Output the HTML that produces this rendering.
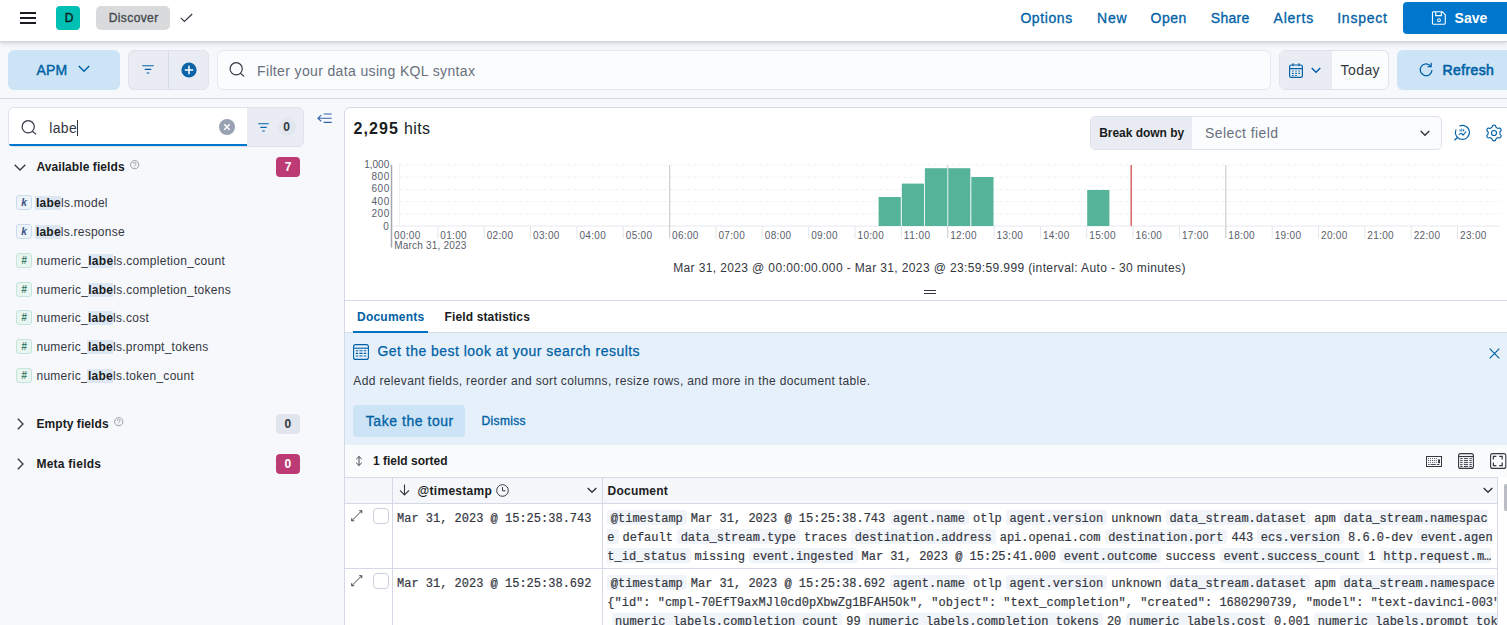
<!DOCTYPE html>
<html lang="en"><head><meta charset="utf-8"><title>Discover - Elastic</title>
<style>
html,body{margin:0;padding:0}
body{width:1507px;height:625px;overflow:hidden;position:relative;background:#F7F8FC;font-family:"Liberation Sans",sans-serif;color:#343741}
.t{position:absolute;white-space:nowrap;line-height:1;margin:0}
.b{position:absolute;box-sizing:border-box}
svg{position:absolute;overflow:visible}

.hl{background:#DDE7F4;font-weight:700;color:#1A1C21}
.tok{position:absolute;box-sizing:border-box;width:15.4px;height:15px;border-radius:3px;font-size:10px;line-height:13px;text-align:center;font-weight:700}
.tk{background:#EEF3FA;border:1px solid #CBDBEE;color:#355282;font-style:italic}
.tn{background:#E9F5F1;border:1px solid #C5E5DA;color:#3B7D6A;font-style:italic}
.dt{background:#F1F4F9;border-radius:3px;display:inline-block;line-height:12px;padding:3px 4px 0 3.5px;margin:0 4px 0 4.25px;vertical-align:baseline}
.ml{position:absolute;white-space:pre;font-family:"Liberation Mono",monospace;font-size:12px;line-height:18px;height:18px;color:#343741;overflow:hidden;-webkit-text-stroke:0.2px #343741}

</style></head><body>
<div class="b" style="left:0px;top:0px;width:1507px;height:42px;background:#FFFFFF;border-bottom:1px solid #D0D3DE;box-shadow:0 1px 2px rgba(110,115,135,.16),0 3px 5px rgba(110,115,135,.11);"></div>
<div class="b" style="left:20px;top:12px;width:16px;height:1.6px;background:#1A1C21;"></div>
<div class="b" style="left:20px;top:17px;width:16px;height:1.6px;background:#1A1C21;"></div>
<div class="b" style="left:20px;top:22.3px;width:16px;height:1.6px;background:#1A1C21;"></div>
<div class="b" style="left:56px;top:6px;width:24px;height:24px;background:#00BFB3;border-radius:4px;"></div>
<div class="t" style="left:64.70px;top:12.00px;font-size:12px;color:#0B1A1A;-webkit-text-stroke:0.35px #0B1A1A;">D</div>
<div class="b" style="left:96px;top:6px;width:74px;height:24px;background:#D9DADC;border-radius:5px;"></div>
<div class="t" style="left:108.70px;top:12.00px;font-size:12px;color:#45494F;letter-spacing:0.403px;-webkit-text-stroke:0.35px #45494F;">Discover</div>
<svg style="left:180px;top:13px;" width="13" height="10" viewBox="0 0 13 10" fill="none"><path d="M0.8 4.9 L4.4 8.4 L12.2 1" stroke="#343741" stroke-width="1.2"/></svg>
<div class="t" style="left:1020.40px;top:11.00px;font-size:14px;color:#0061A6;letter-spacing:0.592px;-webkit-text-stroke:0.3px #0061A6;">Options</div>
<div class="t" style="left:1097.00px;top:11.00px;font-size:14px;color:#0061A6;letter-spacing:0.797px;-webkit-text-stroke:0.3px #0061A6;">New</div>
<div class="t" style="left:1150.60px;top:11.00px;font-size:14px;color:#0061A6;letter-spacing:0.484px;-webkit-text-stroke:0.3px #0061A6;">Open</div>
<div class="t" style="left:1210.80px;top:11.00px;font-size:14px;color:#0061A6;letter-spacing:0.260px;-webkit-text-stroke:0.3px #0061A6;">Share</div>
<div class="t" style="left:1273.60px;top:11.00px;font-size:14px;color:#0061A6;letter-spacing:0.763px;-webkit-text-stroke:0.3px #0061A6;">Alerts</div>
<div class="t" style="left:1337.20px;top:11.00px;font-size:14px;color:#0061A6;letter-spacing:0.777px;-webkit-text-stroke:0.3px #0061A6;">Inspect</div>
<div class="b" style="left:1403px;top:2px;width:110px;height:32px;background:#0077CC;border-radius:4px;"></div>
<svg style="left:1432px;top:11px;" width="14" height="14" viewBox="0 0 15 15" fill="none"><path d="M1.5 0.8h9.6l3.1 3.1v9.3a1 1 0 0 1-1 1h-11.7a1 1 0 0 1-1-1v-11.4a1 1 0 0 1 1-1z" stroke="#fff" stroke-width="1.2"/><path d="M4 1v4h6v-4" stroke="#fff" stroke-width="1.2"/><circle cx="7.5" cy="9.8" r="1.5" stroke="#fff" stroke-width="1.1"/></svg>
<div class="t" style="left:1454.60px;top:11.00px;font-size:14px;color:#FFFFFF;font-weight:700;letter-spacing:-0.032px;">Save</div>
<div class="b" style="left:0px;top:98px;width:1507px;height:1px;background:#D3DAE6;"></div>
<div class="b" style="left:8px;top:50px;width:112px;height:40px;background:#CCE4F5;border-radius:6px;"></div>
<div class="t" style="left:36.60px;top:63.00px;font-size:14px;color:#0061A6;letter-spacing:0.131px;-webkit-text-stroke:0.4px #0061A6;">APM</div>
<svg style="left:78px;top:65px;" width="12" height="8" viewBox="0 0 12 8" fill="none"><path d="M0.8 1 L6 6.3 L11.2 1" stroke="#0061A6" stroke-width="1.5"/></svg>
<div class="b" style="left:128px;top:50px;width:81px;height:40px;background:#E9EDF3;border-radius:6px;border:1px solid #DDE2EC;"></div>
<div class="b" style="left:168px;top:51px;width:1px;height:38px;background:#D5DBE6;"></div>
<svg style="left:142px;top:65px;" width="12" height="9" viewBox="0 0 12 9" fill="none"><path d="M0.3 0.8h11.4M2.7 4.4h6.6M4.6 8h2.8" stroke="#0061A6" stroke-width="1.1"/></svg>
<svg style="left:180.5px;top:61.5px" width="16" height="16" viewBox="0 0 16 16"><circle cx="8" cy="8" r="7.6" fill="#0B64A8"/><path d="M8 3.8v8.4M3.8 8h8.4" stroke="#fff" stroke-width="1.5"/></svg>
<div class="b" style="left:217px;top:50px;width:1054px;height:40px;background:#FBFCFD;border-radius:6px;border:1px solid #E3E7EF;"></div>
<svg style="left:229px;top:62.2px;" width="16" height="15" viewBox="0 0 16 15" fill="none"><circle cx="7.2" cy="6.8" r="6.1" stroke="#343741" stroke-width="1.2"/><path d="M11.3 11.2 L15.2 14.4" stroke="#343741" stroke-width="1.2"/></svg>
<div class="t" style="left:257.00px;top:64.00px;font-size:14px;color:#69707D;letter-spacing:0.360px;">Filter your data using KQL syntax</div>
<div class="b" style="left:1279px;top:50px;width:110px;height:40px;background:#FBFCFD;border-radius:6px;border:1px solid #DDE2EC;"></div>
<div class="b" style="left:1280px;top:51px;width:52px;height:38px;background:#E9EDF3;border-radius:5px 0 0 5px;"></div>
<svg style="left:1289px;top:62.5px;" width="14" height="15" viewBox="0 0 14 15" fill="none"><rect x="0.6" y="2" width="12.8" height="12.4" rx="1.6" stroke="#0061A6" stroke-width="1.2"/><path d="M0.6 5.6h12.8M4 0.3v3M10 0.3v3" stroke="#0061A6" stroke-width="1.2"/><path d="M3 8h1.6M6.2 8h1.6M9.4 8h1.6M3 10.3h1.6M6.2 10.3h1.6M9.4 10.3h1.6M3 12.5h1.6M6.2 12.5h1.6" stroke="#0061A6" stroke-width="1.2"/></svg>
<svg style="left:1311px;top:66.5px;" width="10" height="7" viewBox="0 0 10 7" fill="none"><path d="M0.7 0.9 L5 5.3 L9.3 0.9" stroke="#0061A6" stroke-width="1.4"/></svg>
<div class="t" style="left:1340.60px;top:63.00px;font-size:14px;color:#343741;letter-spacing:0.410px;">Today</div>
<div class="b" style="left:1397px;top:50px;width:116px;height:40px;background:#CCE4F5;border-radius:6px;"></div>
<svg style="left:1418.8px;top:61.8px;" width="14" height="15" viewBox="0 0 14 15" fill="none"><path d="M11.8 4.2A5.9 5.9 0 1 0 13 8" stroke="#0061A6" stroke-width="1.2"/><path d="M8.6 4.6h3.6v-3.8" stroke="#0061A6" stroke-width="1.2"/></svg>
<div class="t" style="left:1442.60px;top:63.00px;font-size:14px;color:#0061A6;letter-spacing:0.363px;-webkit-text-stroke:0.6px #0061A6;">Refresh</div>
<div class="b" style="left:8px;top:107px;width:296px;height:40px;background:#E9EDF3;border-radius:6px;border:1px solid #DDE2EC;"></div>
<div class="b" style="left:9px;top:108px;width:238px;height:38px;background:#FFFFFF;border-radius:5px 0 0 5px;"></div>
<div class="b" style="left:9px;top:144px;width:238px;height:2px;background:#0077CC;border-radius:0 0 0 5px;"></div>
<svg style="left:20.5px;top:119.5px;" width="16" height="15" viewBox="0 0 16 15" fill="none"><circle cx="7.2" cy="6.8" r="6.1" stroke="#343741" stroke-width="1.2"/><path d="M11.3 11.2 L15.2 14.4" stroke="#343741" stroke-width="1.2"/></svg>
<div class="t" style="left:49.20px;top:121.00px;font-size:14px;color:#343741;letter-spacing:0.377px;">labe</div>
<div class="b" style="left:77.3px;top:119.5px;width:1px;height:16px;background:#343741;"></div>
<svg style="left:219px;top:119px" width="16" height="16" viewBox="0 0 16 16"><circle cx="8" cy="8" r="8" fill="#98A2B3"/><path d="M5.3 5.3l5.4 5.4M10.7 5.3l-5.4 5.4" stroke="#fff" stroke-width="1.5"/></svg>
<svg style="left:257.5px;top:123px;" width="11" height="9" viewBox="0 0 11 9" fill="none"><path d="M0.2 0.8h10.6M2.4 4.4h6.2M4.2 8h2.6" stroke="#0061A6" stroke-width="1.1"/></svg>
<div class="b" style="left:277.5px;top:118px;width:18px;height:18px;background:#E2E7EF;border-radius:9px;"></div>
<div class="t" style="left:283.20px;top:121.00px;font-size:12px;color:#343741;font-weight:700;">0</div>
<svg style="left:316.5px;top:113px;" width="15" height="11" viewBox="0 0 15 11" fill="none"><path d="M6.7 1h8M6.7 9.4h8M1.2 5.2h13.5M4.2 2.1L1 5.2l3.2 3.1" stroke="#2E62AA" stroke-width="1.15"/></svg>
<svg style="left:14px;top:164px;" width="12" height="7" viewBox="0 0 12 7" fill="none"><path d="M0.7 0.7 L6 6 L11.3 0.7" stroke="#343741" stroke-width="1.3"/></svg>
<div class="t" style="left:36.40px;top:161.00px;font-size:12px;color:#1A1C21;font-weight:700;letter-spacing:0.085px;">Available fields</div>
<svg style="left:130.4px;top:160.2px" width="9.4" height="9.4" viewBox="0 0 10 10" fill="none"><circle cx="5" cy="5" r="4.4" stroke="#69707D" stroke-width="0.7"/><path d="M3.6 4a1.4 1.4 0 1 1 2 1.3c-.4.2-.6.5-.6.9" stroke="#69707D" stroke-width="0.7"/><circle cx="5" cy="7.5" r="0.45" fill="#69707D"/></svg>
<div class="b" style="left:276px;top:157px;width:24px;height:20px;background:#BD3B74;border-radius:4px;"></div>
<div class="t" style="left:284.70px;top:161.00px;font-size:12px;color:#FFFFFF;font-weight:700;">7</div>
<div class="tok tk" style="left:16.3px;top:195.3px">k</div>
<div class="t" style="left:35.9px;top:197.00px;font-size:12px;letter-spacing:0.267px;color:#343741"><span class="hl" style="padding:0 0 0 .5px;margin-left:-.5px">labe</span>ls.model</div>
<div class="tok tk" style="left:16.3px;top:224.1px">k</div>
<div class="t" style="left:35.9px;top:226.00px;font-size:12px;letter-spacing:0.235px;color:#343741"><span class="hl" style="padding:0 0 0 .5px;margin-left:-.5px">labe</span>ls.response</div>
<div class="tok tn" style="left:16.3px;top:253.1px">#</div>
<div class="t" style="left:36.5px;top:255.00px;font-size:12px;letter-spacing:0.293px;color:#343741">numeric_<span class="hl" style="padding:0 0 0 .5px;margin-left:-.5px">labe</span>ls.completion_count</div>
<div class="tok tn" style="left:16.3px;top:282.3px">#</div>
<div class="t" style="left:36.5px;top:284.00px;font-size:12px;letter-spacing:0.284px;color:#343741">numeric_<span class="hl" style="padding:0 0 0 .5px;margin-left:-.5px">labe</span>ls.completion_tokens</div>
<div class="tok tn" style="left:16.3px;top:310.0px">#</div>
<div class="t" style="left:36.5px;top:312.00px;font-size:12px;letter-spacing:0.270px;color:#343741">numeric_<span class="hl" style="padding:0 0 0 .5px;margin-left:-.5px">labe</span>ls.cost</div>
<div class="tok tn" style="left:16.3px;top:339.1px">#</div>
<div class="t" style="left:36.5px;top:341.00px;font-size:12px;letter-spacing:0.259px;color:#343741">numeric_<span class="hl" style="padding:0 0 0 .5px;margin-left:-.5px">labe</span>ls.prompt_tokens</div>
<div class="tok tn" style="left:16.3px;top:367.9px">#</div>
<div class="t" style="left:36.5px;top:370.00px;font-size:12px;letter-spacing:0.260px;color:#343741">numeric_<span class="hl" style="padding:0 0 0 .5px;margin-left:-.5px">labe</span>ls.token_count</div>
<svg style="left:16.5px;top:417.5px;" width="7" height="12" viewBox="0 0 7 12" fill="none"><path d="M0.8 0.7 L6 6 L0.8 11.3" stroke="#343741" stroke-width="1.3"/></svg>
<div class="t" style="left:36.40px;top:418.00px;font-size:12px;color:#1A1C21;font-weight:700;letter-spacing:0.077px;">Empty fields</div>
<svg style="left:114.4px;top:417px" width="9.4" height="9.4" viewBox="0 0 10 10" fill="none"><circle cx="5" cy="5" r="4.4" stroke="#69707D" stroke-width="0.7"/><path d="M3.6 4a1.4 1.4 0 1 1 2 1.3c-.4.2-.6.5-.6.9" stroke="#69707D" stroke-width="0.7"/><circle cx="5" cy="7.5" r="0.45" fill="#69707D"/></svg>
<div class="b" style="left:276px;top:414px;width:24px;height:20px;background:#E0E5EE;border-radius:4px;"></div>
<div class="t" style="left:284.50px;top:418.00px;font-size:12px;color:#343741;font-weight:700;">0</div>
<svg style="left:16.5px;top:457.5px;" width="7" height="12" viewBox="0 0 7 12" fill="none"><path d="M0.8 0.7 L6 6 L0.8 11.3" stroke="#343741" stroke-width="1.3"/></svg>
<div class="t" style="left:36.40px;top:458.00px;font-size:12px;color:#1A1C21;font-weight:700;letter-spacing:0.258px;">Meta fields</div>
<div class="b" style="left:276px;top:454px;width:24px;height:20px;background:#BD3B74;border-radius:4px;"></div>
<div class="t" style="left:284.50px;top:458.00px;font-size:12px;color:#FFFFFF;font-weight:700;">0</div>
<div class="b" style="left:344px;top:107px;width:1170px;height:530px;background:#FFFFFF;border:1px solid #D3DAE6;border-radius:6px 0 0 0;"></div>
<div class="t" style="left:353.40px;top:121.00px;font-size:16px;color:#1A1C21;font-weight:700;letter-spacing:1.140px;">2,295</div>
<div class="t" style="left:404.00px;top:121.00px;font-size:16px;color:#1A1C21;letter-spacing:0.367px;">hits</div>
<div class="b" style="left:1090px;top:116px;width:352px;height:33.5px;background:#FBFCFD;border-radius:5px;border:1px solid #DDE2EC;"></div>
<div class="b" style="left:1091px;top:117px;width:101px;height:31.5px;background:#E9EDF3;border-radius:5px 0 0 5px;"></div>
<div class="t" style="left:1099.20px;top:127.00px;font-size:12px;color:#1A1C21;font-weight:700;letter-spacing:-0.029px;">Break down by</div>
<div class="t" style="left:1205.00px;top:126.00px;font-size:14px;color:#69707D;letter-spacing:0.411px;">Select field</div>
<svg style="left:1419.6px;top:129.5px;" width="10" height="7" viewBox="0 0 10 7" fill="none"><path d="M0.7 0.9 L5 5.3 L9.3 0.9" stroke="#343741" stroke-width="1.4"/></svg>
<svg style="left:1454px;top:124.4px;" width="17" height="17" viewBox="0 0 17 17" fill="none"><path d="M5.44 2.06A7 7 0 1 1 2.06 5.44" stroke="#0061A6" stroke-width="1.1"/><path d="M3.45 13.35 L0.5 16.3" stroke="#0061A6" stroke-width="1.3"/><path d="M4.8 10.5l2.7-1.2 1.5 1.8 3.2-3.6" stroke="#0061A6" stroke-width="1.1"/><path d="M6.1 5.2v2.3M7.9 4.6v2.9M9.7 5.2v2.3" stroke="#0061A6" stroke-width="0.9"/></svg>
<svg style="left:1486px;top:124.8px;" width="16" height="16" viewBox="0 0 16 16" fill="none"><path d="M8.00 0.17 L8.55 0.20 L9.08 0.33 L9.55 0.72 L9.83 1.63 L10.07 2.32 L10.40 2.61 L10.76 2.81 L11.11 3.02 L11.47 3.22 L11.89 3.37 L12.60 3.24 L13.53 3.02 L14.11 3.23 L14.48 3.63 L14.78 4.09 L15.02 4.57 L15.19 5.10 L15.08 5.70 L14.43 6.40 L13.96 6.95 L13.87 7.38 L13.87 7.79 L13.87 8.21 L13.87 8.62 L13.96 9.05 L14.43 9.60 L15.08 10.30 L15.19 10.90 L15.02 11.43 L14.78 11.91 L14.48 12.37 L14.11 12.77 L13.53 12.98 L12.60 12.76 L11.89 12.63 L11.47 12.78 L11.11 12.98 L10.76 13.19 L10.40 13.39 L10.07 13.68 L9.83 14.37 L9.55 15.28 L9.08 15.67 L8.55 15.80 L8.00 15.83 L7.45 15.80 L6.92 15.67 L6.45 15.28 L6.17 14.37 L5.93 13.68 L5.60 13.39 L5.24 13.19 L4.89 12.98 L4.53 12.78 L4.11 12.63 L3.40 12.76 L2.47 12.98 L1.89 12.77 L1.52 12.37 L1.22 11.91 L0.98 11.43 L0.81 10.90 L0.92 10.30 L1.57 9.60 L2.04 9.05 L2.13 8.62 L2.13 8.21 L2.13 7.79 L2.13 7.38 L2.04 6.95 L1.57 6.40 L0.92 5.70 L0.81 5.10 L0.98 4.57 L1.22 4.09 L1.52 3.63 L1.89 3.23 L2.47 3.02 L3.40 3.24 L4.11 3.37 L4.53 3.22 L4.89 3.02 L5.24 2.81 L5.60 2.61 L5.93 2.32 L6.17 1.63 L6.45 0.72 L6.92 0.33 L7.45 0.20Z" stroke="#0061A6" stroke-width="1.15" stroke-linejoin="round"/><circle cx="8" cy="8" r="2.5" stroke="#0061A6" stroke-width="1.15"/></svg>
<svg style="left:0;top:0" width="1507" height="300" viewBox="0 0 1507 300"><line x1="399.5" x2="1500" y1="213.8" y2="213.8" stroke="#EDEFF3" stroke-width="1" stroke-dasharray="3 3"/><line x1="399.5" x2="1500" y1="201.6" y2="201.6" stroke="#EDEFF3" stroke-width="1" stroke-dasharray="3 3"/><line x1="399.5" x2="1500" y1="189.4" y2="189.4" stroke="#EDEFF3" stroke-width="1" stroke-dasharray="3 3"/><line x1="399.5" x2="1500" y1="177.2" y2="177.2" stroke="#EDEFF3" stroke-width="1" stroke-dasharray="3 3"/><line x1="399.5" x2="1500" y1="165.0" y2="165.0" stroke="#EDEFF3" stroke-width="1" stroke-dasharray="3 3"/><line x1="391.5" x2="1500" y1="226.0" y2="226.0" stroke="#E6E9EF" stroke-width="1"/><line x1="391.5" x2="391.5" y1="165.0" y2="247.6" stroke="#A4A7AD" stroke-width="1.5"/><line x1="437.9" x2="437.9" y1="226.0" y2="238.5" stroke="#E3E6EB" stroke-width="1"/><line x1="484.2" x2="484.2" y1="226.0" y2="238.5" stroke="#E3E6EB" stroke-width="1"/><line x1="530.5" x2="530.5" y1="226.0" y2="238.5" stroke="#E3E6EB" stroke-width="1"/><line x1="576.9" x2="576.9" y1="226.0" y2="238.5" stroke="#E3E6EB" stroke-width="1"/><line x1="623.2" x2="623.2" y1="226.0" y2="238.5" stroke="#E3E6EB" stroke-width="1"/><line x1="669.6" x2="669.6" y1="165.0" y2="238" stroke="#CFCFD2" stroke-width="1.2"/><line x1="716.0" x2="716.0" y1="226.0" y2="238.5" stroke="#E3E6EB" stroke-width="1"/><line x1="762.3" x2="762.3" y1="226.0" y2="238.5" stroke="#E3E6EB" stroke-width="1"/><line x1="808.7" x2="808.7" y1="226.0" y2="238.5" stroke="#E3E6EB" stroke-width="1"/><line x1="855.0" x2="855.0" y1="226.0" y2="238.5" stroke="#E3E6EB" stroke-width="1"/><line x1="901.4" x2="901.4" y1="226.0" y2="238.5" stroke="#E3E6EB" stroke-width="1"/><line x1="947.7" x2="947.7" y1="165.0" y2="238" stroke="#CFCFD2" stroke-width="1.2"/><line x1="994.1" x2="994.1" y1="226.0" y2="238.5" stroke="#E3E6EB" stroke-width="1"/><line x1="1040.4" x2="1040.4" y1="226.0" y2="238.5" stroke="#E3E6EB" stroke-width="1"/><line x1="1086.8" x2="1086.8" y1="226.0" y2="238.5" stroke="#E3E6EB" stroke-width="1"/><line x1="1133.1" x2="1133.1" y1="226.0" y2="238.5" stroke="#E3E6EB" stroke-width="1"/><line x1="1179.5" x2="1179.5" y1="226.0" y2="238.5" stroke="#E3E6EB" stroke-width="1"/><line x1="1225.8" x2="1225.8" y1="165.0" y2="238" stroke="#CFCFD2" stroke-width="1.2"/><line x1="1272.2" x2="1272.2" y1="226.0" y2="238.5" stroke="#E3E6EB" stroke-width="1"/><line x1="1318.5" x2="1318.5" y1="226.0" y2="238.5" stroke="#E3E6EB" stroke-width="1"/><line x1="1364.8" x2="1364.8" y1="226.0" y2="238.5" stroke="#E3E6EB" stroke-width="1"/><line x1="1411.2" x2="1411.2" y1="226.0" y2="238.5" stroke="#E3E6EB" stroke-width="1"/><line x1="1457.5" x2="1457.5" y1="226.0" y2="238.5" stroke="#E3E6EB" stroke-width="1"/><line x1="399.5" x2="399.5" y1="164.0" y2="226.0" stroke="#ECEEF2" stroke-width="1"/><rect x="878.6" y="197.0" width="22.2" height="29.0" fill="#54B399"/><rect x="901.8" y="183.6" width="22.2" height="42.4" fill="#54B399"/><rect x="924.9" y="168.2" width="22.2" height="57.8" fill="#54B399"/><rect x="948.1" y="168.2" width="22.2" height="57.8" fill="#54B399"/><rect x="971.3" y="177.0" width="22.2" height="49.0" fill="#54B399"/><rect x="1087.2" y="190.0" width="22.2" height="36.0" fill="#54B399"/><line x1="947.7" x2="947.7" y1="168.2" y2="225.5" stroke="#BFE3D8" stroke-width="1.2"/><line x1="1131.2" x2="1131.2" y1="165" y2="226.0" stroke="#D6504F" stroke-width="1.3"/></svg>
<div class="t" style="left:364.20px;top:160.00px;font-size:10px;color:#5A606B;letter-spacing:-0.006px;">1,000</div>
<div class="t" style="left:371.40px;top:172.00px;font-size:10px;color:#5A606B;letter-spacing:0.558px;">800</div>
<div class="t" style="left:371.40px;top:184.00px;font-size:10px;color:#5A606B;letter-spacing:0.558px;">600</div>
<div class="t" style="left:371.40px;top:197.00px;font-size:10px;color:#5A606B;letter-spacing:0.558px;">400</div>
<div class="t" style="left:371.40px;top:209.00px;font-size:10px;color:#5A606B;letter-spacing:0.558px;">200</div>
<div class="t" style="left:383.20px;top:222.00px;font-size:10px;color:#5A606B;">0</div>
<div class="t" style="left:394.00px;top:231.00px;font-size:10px;color:#5A606B;letter-spacing:0.319px;">00:00</div>
<div class="t" style="left:440.35px;top:231.00px;font-size:10px;color:#5A606B;letter-spacing:0.319px;">01:00</div>
<div class="t" style="left:486.70px;top:231.00px;font-size:10px;color:#5A606B;letter-spacing:0.319px;">02:00</div>
<div class="t" style="left:533.05px;top:231.00px;font-size:10px;color:#5A606B;letter-spacing:0.319px;">03:00</div>
<div class="t" style="left:579.40px;top:231.00px;font-size:10px;color:#5A606B;letter-spacing:0.319px;">04:00</div>
<div class="t" style="left:625.75px;top:231.00px;font-size:10px;color:#5A606B;letter-spacing:0.319px;">05:00</div>
<div class="t" style="left:672.10px;top:231.00px;font-size:10px;color:#5A606B;letter-spacing:0.319px;">06:00</div>
<div class="t" style="left:718.45px;top:231.00px;font-size:10px;color:#5A606B;letter-spacing:0.319px;">07:00</div>
<div class="t" style="left:764.80px;top:231.00px;font-size:10px;color:#5A606B;letter-spacing:0.319px;">08:00</div>
<div class="t" style="left:811.15px;top:231.00px;font-size:10px;color:#5A606B;letter-spacing:0.319px;">09:00</div>
<div class="t" style="left:857.50px;top:231.00px;font-size:10px;color:#5A606B;letter-spacing:0.319px;">10:00</div>
<div class="t" style="left:903.85px;top:231.00px;font-size:10px;color:#5A606B;letter-spacing:0.504px;">11:00</div>
<div class="t" style="left:950.20px;top:231.00px;font-size:10px;color:#5A606B;letter-spacing:0.319px;">12:00</div>
<div class="t" style="left:996.55px;top:231.00px;font-size:10px;color:#5A606B;letter-spacing:0.319px;">13:00</div>
<div class="t" style="left:1042.90px;top:231.00px;font-size:10px;color:#5A606B;letter-spacing:0.319px;">14:00</div>
<div class="t" style="left:1089.25px;top:231.00px;font-size:10px;color:#5A606B;letter-spacing:0.319px;">15:00</div>
<div class="t" style="left:1135.60px;top:231.00px;font-size:10px;color:#5A606B;letter-spacing:0.319px;">16:00</div>
<div class="t" style="left:1181.95px;top:231.00px;font-size:10px;color:#5A606B;letter-spacing:0.319px;">17:00</div>
<div class="t" style="left:1228.30px;top:231.00px;font-size:10px;color:#5A606B;letter-spacing:0.319px;">18:00</div>
<div class="t" style="left:1274.65px;top:231.00px;font-size:10px;color:#5A606B;letter-spacing:0.319px;">19:00</div>
<div class="t" style="left:1321.00px;top:231.00px;font-size:10px;color:#5A606B;letter-spacing:0.319px;">20:00</div>
<div class="t" style="left:1367.35px;top:231.00px;font-size:10px;color:#5A606B;letter-spacing:0.319px;">21:00</div>
<div class="t" style="left:1413.70px;top:231.00px;font-size:10px;color:#5A606B;letter-spacing:0.319px;">22:00</div>
<div class="t" style="left:1460.05px;top:231.00px;font-size:10px;color:#5A606B;letter-spacing:0.319px;">23:00</div>
<div class="t" style="left:394.20px;top:241.00px;font-size:10px;color:#5A606B;letter-spacing:0.201px;">March 31, 2023</div>
<div class="t" style="left:673.20px;top:262.00px;font-size:12px;color:#343741;letter-spacing:0.375px;">Mar 31, 2023 @ 00:00:00.000 - Mar 31, 2023 @ 23:59:59.999 (interval: Auto - 30 minutes)</div>
<div class="b" style="left:923.5px;top:289.6px;width:12px;height:1.2px;background:#343741;"></div>
<div class="b" style="left:923.5px;top:292.6px;width:12px;height:1.2px;background:#343741;"></div>
<div class="b" style="left:345px;top:300px;width:1162px;height:1px;background:#D3DAE6;"></div>
<div class="t" style="left:357.00px;top:311.00px;font-size:12px;color:#0061A6;font-weight:700;letter-spacing:0.232px;">Documents</div>
<div class="b" style="left:353px;top:331px;width:75px;height:2px;background:#0071C2;"></div>
<div class="t" style="left:444.60px;top:311.00px;font-size:12px;color:#1A1C21;font-weight:700;letter-spacing:0.123px;">Field statistics</div>
<div class="b" style="left:345px;top:333px;width:1162px;height:112px;background:#E6F0FA;"></div>
<div class="b" style="left:345px;top:332px;width:1162px;height:1px;background:#D6DCE8;"></div>
<div class="b" style="left:353px;top:331px;width:75px;height:2px;background:#0071C2;"></div>
<svg style="left:353px;top:344px;" width="16" height="16" viewBox="0 0 16 16" fill="none"><rect x="0.6" y="0.6" width="14.8" height="14.8" rx="2" stroke="#0061A6" stroke-width="1.1"/><path d="M0.6 4.2h14.8" stroke="#0061A6" stroke-width="1.1"/><path d="M2.8 6.8h2.4M6.4 6.8h3.2M10.8 6.8h2.4M2.8 9.4h2.4M6.4 9.4h3.2M10.8 9.4h2.4M2.8 12h2.4M6.4 12h3.2M10.8 12h2.4" stroke="#0061A6" stroke-width="1.1"/></svg>
<div class="t" style="left:377.40px;top:344.00px;font-size:14px;color:#0061A6;letter-spacing:0.478px;-webkit-text-stroke:0.25px #0061A6;">Get the best look at your search results</div>
<div class="t" style="left:353.30px;top:375.00px;font-size:12px;color:#343741;letter-spacing:0.353px;">Add relevant fields, reorder and sort columns, resize rows, and more in the document table.</div>
<div class="b" style="left:353px;top:405px;width:112px;height:32px;background:#CCE4F5;border-radius:4px;"></div>
<div class="t" style="left:365.80px;top:414.00px;font-size:14px;color:#0061A6;letter-spacing:0.539px;-webkit-text-stroke:0.3px #0061A6;">Take the tour</div>
<div class="t" style="left:481.60px;top:415.00px;font-size:12px;color:#0061A6;letter-spacing:0.334px;-webkit-text-stroke:0.35px #0061A6;">Dismiss</div>
<svg style="left:1489px;top:348px;" width="11" height="11" viewBox="0 0 11 11" fill="none"><path d="M0.7 0.7l9.6 9.6M10.3 0.7l-9.6 9.6" stroke="#0061A6" stroke-width="1.2"/></svg>
<div class="b" style="left:345px;top:445px;width:1162px;height:32px;background:#FAFBFD;"></div>
<svg style="left:354.5px;top:456px;" width="8" height="10" viewBox="0 0 8 10" fill="none"><path d="M4 0.5v9M1.2 3.2L4 0.5l2.8 2.7M1.2 6.8L4 9.5l2.8-2.7" stroke="#343741" stroke-width="0.9"/></svg>
<div class="t" style="left:373.00px;top:455.00px;font-size:12px;color:#1A1C21;font-weight:700;letter-spacing:-0.006px;">1 field sorted</div>
<svg style="left:1426px;top:456px;" width="16" height="11" viewBox="0 0 16 11" fill="none"><rect x="0.5" y="0.5" width="15" height="10" stroke="#343741" stroke-width="1"/><path d="M2.2 2.6h9.6M2.2 4.5h9.6M2.2 6.4h9.6" stroke="#343741" stroke-width="0.9" stroke-dasharray="0.9 1"/><path d="M2.2 8.5h1.4M4.6 8.5h5.2M10.8 8.5h2.6" stroke="#343741" stroke-width="0.9"/><rect x="12.1" y="3.4" width="1.9" height="3.8" fill="#343741"/></svg>
<svg style="left:1458px;top:453px;" width="16" height="16" viewBox="0 0 16 16" fill="none"><rect x="0.6" y="0.6" width="14.8" height="14.8" rx="2" stroke="#343741" stroke-width="1.1"/><path d="M0.6 3.5h14.8" stroke="#343741" stroke-width="1.1"/><path d="M2.2 5.6h2.4M5.9 5.6h4.2M11.4 5.6h2.4M2.2 7.6h2.4M5.9 7.6h4.2M11.4 7.6h2.4M2.2 9.6h2.4M5.9 9.6h4.2M11.4 9.6h2.4M2.2 11.6h2.4M5.9 11.6h4.2M11.4 11.6h2.4M2.2 13.5h2.4M5.9 13.5h4.2M11.4 13.5h2.4" stroke="#343741" stroke-width="0.95"/></svg>
<svg style="left:1490px;top:453px;" width="17" height="16" viewBox="0 0 17 16" fill="none"><rect x="0.6" y="0.6" width="15.2" height="14.8" rx="2" stroke="#343741" stroke-width="1.1"/><path d="M3.4 6.4v-3h3M9.2 3.4h3v3M12.2 9.6v3h-3M6.4 12.6h-3v-3" stroke="#343741" stroke-width="1.2"/></svg>
<div class="b" style="left:345px;top:477px;width:1152.5px;height:27px;background:#F5F7FA;border-top:1px solid #D3DAE6;border-bottom:1px solid #D3DAE6;"></div>
<div class="b" style="left:392px;top:477px;width:1px;height:160px;background:#D3DAE6;"></div>
<div class="b" style="left:602px;top:477px;width:1px;height:160px;background:#D3DAE6;"></div>
<div class="b" style="left:1497px;top:477px;width:1px;height:160px;background:#D3DAE6;"></div>
<div class="b" style="left:345px;top:568px;width:1152px;height:1px;background:#D3DAE6;"></div>
<svg style="left:399px;top:484px;" width="11" height="12" viewBox="0 0 11 12" fill="none"><path d="M5.5 0.6v10.2M1 6.4l4.5 4.5 4.5-4.5" stroke="#343741" stroke-width="1.1"/></svg>
<div class="t" style="left:417.60px;top:485.00px;font-size:12px;color:#1A1C21;font-weight:700;letter-spacing:0.276px;">@timestamp</div>
<svg style="left:496.4px;top:484px;" width="13" height="13" viewBox="0 0 13 13" fill="none"><circle cx="6.5" cy="6.5" r="5.8" stroke="#343741" stroke-width="1"/><path d="M6.5 3v3.8h3" stroke="#343741" stroke-width="1"/></svg>
<svg style="left:586.5px;top:487px;" width="10" height="7" viewBox="0 0 10 7" fill="none"><path d="M0.7 0.9 L5 5.3 L9.3 0.9" stroke="#343741" stroke-width="1.4"/></svg>
<div class="t" style="left:607.60px;top:485.00px;font-size:12px;color:#1A1C21;font-weight:700;letter-spacing:0.219px;">Document</div>
<svg style="left:1483px;top:487px;" width="10" height="7" viewBox="0 0 10 7" fill="none"><path d="M0.7 0.9 L5 5.3 L9.3 0.9" stroke="#343741" stroke-width="1.4"/></svg>
<div class="b" style="left:1503.8px;top:484px;width:4px;height:27px;background:#B9BCC3;border-radius:2px;"></div>
<svg style="left:351.2px;top:510.4px;" width="11.5" height="11.5" viewBox="0 0 11.5 11.5" fill="none"><path d="M0.8 10.7L10.7 0.8M8.2 0.7h2.6v2.6M0.7 8.2v2.6h2.6" stroke="#343741" stroke-width="0.9"/></svg>
<div class="b" style="left:373px;top:508px;width:16px;height:16px;background:#FFFFFF;border:1px solid #C9CFDB;border-radius:4px;"></div>
<div class="ml" style="left:397px;top:510px">Mar 31, 2023 @ 15:25:38.743</div>
<svg style="left:351.2px;top:575.4px;" width="11.5" height="11.5" viewBox="0 0 11.5 11.5" fill="none"><path d="M0.8 10.7L10.7 0.8M8.2 0.7h2.6v2.6M0.7 8.2v2.6h2.6" stroke="#343741" stroke-width="0.9"/></svg>
<div class="b" style="left:373px;top:573px;width:16px;height:16px;background:#FFFFFF;border:1px solid #C9CFDB;border-radius:4px;"></div>
<div class="ml" style="left:397px;top:575px">Mar 31, 2023 @ 15:25:38.692</div>
<div class="ml" style="left:607.3px;top:510px;width:890px;"><span class="dt" style="margin-left:0">@timestamp</span>Mar 31, 2023 @ 15:25:38.743<span class="dt">agent.name</span>otlp<span class="dt">agent.version</span>unknown<span class="dt">data_stream.dataset</span>apm<span class="dt" style="margin-right:0;padding-right:0;border-radius:3px 0 0 3px">data_stream.namespac</span></div>
<div class="ml" style="left:607.3px;top:529px;width:890px;"><span class="dt" style="margin-left:0;padding-left:0;border-radius:0 3px 3px 0">e</span>default<span class="dt">data_stream.type</span>traces<span class="dt">destination.address</span>api.openai.com<span class="dt">destination.port</span>443<span class="dt">ecs.version</span>8.6.0-dev<span class="dt" style="margin-right:0;padding-right:0;border-radius:3px 0 0 3px">event.agen</span></div>
<div class="ml" style="left:607.3px;top:548px;width:890px;"><span class="dt" style="margin-left:0;padding-left:0;border-radius:0 3px 3px 0">t_id_status</span>missing<span class="dt">event.ingested</span>Mar 31, 2023 @ 15:25:41.000<span class="dt">event.outcome</span>success<span class="dt">event.success_count</span>1<span class="dt" style="margin-right:0;padding-right:0;border-radius:3px 0 0 3px">http.request.m…</span></div>
<div class="ml" style="left:607.3px;top:575px;width:890px;"><span class="dt" style="margin-left:0">@timestamp</span>Mar 31, 2023 @ 15:25:38.692<span class="dt">agent.name</span>otlp<span class="dt">agent.version</span>unknown<span class="dt">data_stream.dataset</span>apm<span class="dt" style="margin-right:0;padding-right:0;border-radius:3px 0 0 3px">data_stream.namespace</span></div>
<div class="ml" style="left:607.3px;top:594px;width:890px;">{&quot;id&quot;: &quot;cmpl-70EfT9axMJl0cd0pXbwZg1BFAH5Ok&quot;, &quot;object&quot;: &quot;text_completion&quot;, &quot;created&quot;: 1680290739, &quot;model&quot;: &quot;text-davinci-003&quot;</div>
<div class="ml" style="left:607.3px;top:613px;width:890px;"><span class="dt">numeric_labels.completion_count</span>99<span class="dt">numeric_labels.completion_tokens</span>20<span class="dt">numeric_labels.cost</span>0.001<span class="dt" style="margin-right:0;padding-right:0;border-radius:3px 0 0 3px">numeric_labels.prompt_tok</span></div>
</body></html>
